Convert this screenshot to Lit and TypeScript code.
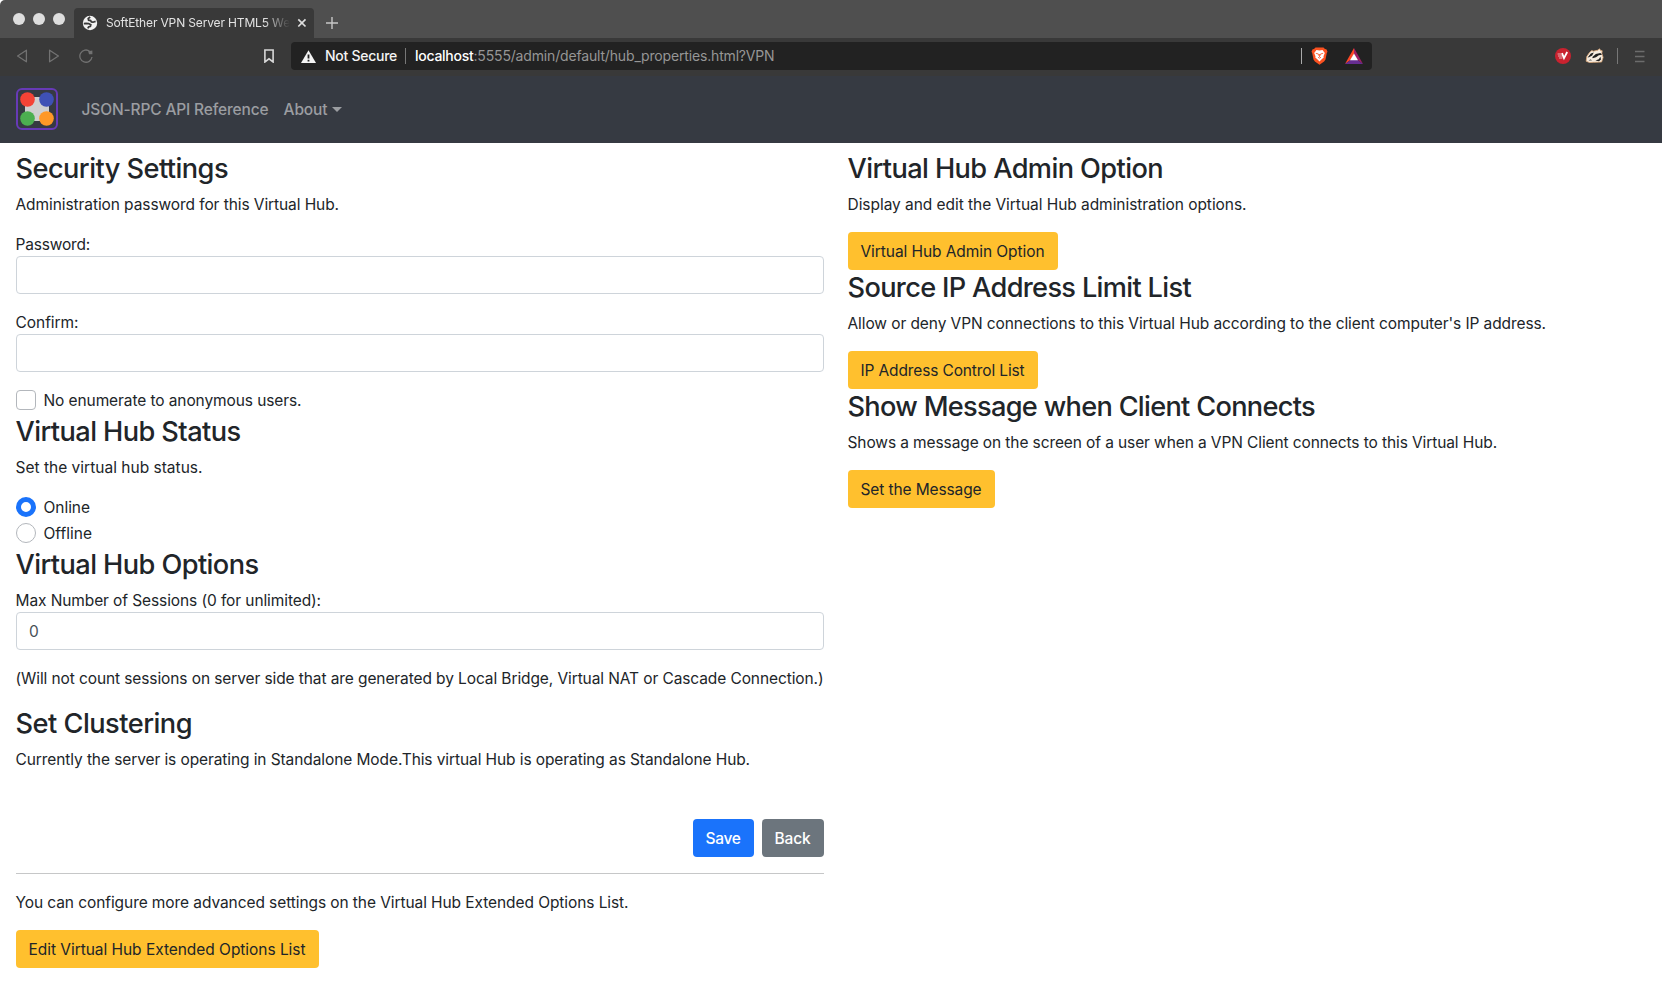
import { LitElement, html, css, svg } from "lit";
import { customElement, property } from "lit/decorators.js";

/** One line of text whose tracking is adjusted to reach a given width. */
@customElement("fit-text")
class FitText extends LitElement {
  @property({ type: Number }) w = 0;
  static styles = css`
    :host { display: inline-block; white-space: nowrap; }
    span { display: inline-block; }
  `;
  render() {
    return html`<span><slot></slot></span>`;
  }
  firstUpdated() {
    const el = this.renderRoot.querySelector("span")!;
    const n = (this.textContent || "").length;
    const natural = el.getBoundingClientRect().width;
    if (this.w && n) this.style.letterSpacing = `${(this.w - natural) / n}px`;
  }
}

@customElement("browser-chrome")
class BrowserChrome extends LitElement {
  static styles = css`
    :host { display: block; font-family: Inter, "Liberation Sans", sans-serif; }
    svg { display: block; flex: none; }
    .strip { height: 38px; background: #4f4f4f; display: flex; align-items: flex-end; border-top-left-radius: 5px; }
    .lights { display: flex; gap: 8px; padding: 0 9px 13px 13px; }
    .light { width: 12px; height: 12px; border-radius: 50%; background: #dedede; }
    .tab { box-sizing: border-box; width: 240px; height: 30px; background: #393939; border-radius: 4px 4px 0 0; display: flex; align-items: center; padding: 0 7px 0 8px; }
    .title { width: 184px; margin-left: 8px; overflow: hidden; font-size: 12px; line-height: 20px; color: #e3e3e3; white-space: nowrap;
      -webkit-mask-image: linear-gradient(90deg, #000 158px, transparent 184px); mask-image: linear-gradient(90deg, #000 158px, transparent 184px); }
    .x { margin-left: 7px; }
    .plus { margin: 0 0 8px 11px; }
    .bar { height: 38px; background: #393939; display: flex; align-items: center; padding-right: 17px; box-sizing: border-box; }
    .nav { display: flex; width: 264px; padding-left: 16px; box-sizing: border-box; gap: 20px; margin-top: -2px; }
    .mark { margin-top: -2px; }
    .reload { margin-left: -1px; }
    .address { box-sizing: border-box; margin-left: 17px; width: 1081px; height: 28px; margin-top: -2px; border-radius: 4px; background: #222; display: flex; align-items: center; padding: 0 9px 0 10px; font-size: 14px; line-height: 20px; }
    .warn { color: #f4f4f4; margin-left: 9px; font-weight: 500; }
    .sep { width: 1px; height: 16px; background: #777; margin: 0 9px 0 8px; }
    .host { color: #fff; font-weight: 500; }
    .path { color: #969696; }
    .marks { margin-left: auto; display: flex; align-items: center; }
    .line { width: 1px; height: 16px; background: #aaa; margin-right: 9px; }
    .tri { margin-left: 17px; }
    .ext { margin-left: auto; display: flex; align-items: center; margin-top: -2px; }
    .ext .line { background: #777; margin: 0 16px 0 13px; }
    .badger { margin-left: 14px; }
  `;
  render() {
    return html`
      <div class="strip">
        <div class="lights"><div class="light"></div><div class="light"></div><div class="light"></div></div>
        <div class="tab">
          <svg width="16" height="16" viewBox="0 0 16 16"><circle cx="8" cy="8" r="7.2" fill="#f2f2f2"/>
            <path d="M1.8 8.6 4 8.4 6.6 8.6 8.8 9.8 8.4 11.4 6.6 12 5.8 13.4M8.2 2 6.2 3.6 6.6 5.2 8.6 5.6 9.4 7 11 7.2 13.6 6.4" fill="none" stroke="#393939" stroke-width="1.7"/></svg>
          <div class="title"><fit-text w="184">SoftEther VPN Server HTML5 We</fit-text></div>
          <svg class="x" width="10" height="10" viewBox="0 0 10 10"><path d="m1.3 1.3 7.2 7.2m0-7.2-7.2 7.2" stroke="#dedede" stroke-width="1.7"/></svg>
        </div>
        <svg class="plus" width="14" height="14" viewBox="0 0 14 14"><path d="M7 1v12M1 7h12" stroke="#c8c8c8" stroke-width="1.4"/></svg>
      </div>
      <div class="bar">
        <div class="nav">
          <svg width="12" height="14" viewBox="0 0 12 14"><path d="M10.4 1.2v11.6L1.6 7z" fill="none" stroke="#727272" stroke-width="1.3" stroke-linejoin="round"/></svg>
          <svg width="12" height="14" viewBox="0 0 12 14"><path d="M1.6 1.2v11.6L10.4 7z" fill="none" stroke="#727272" stroke-width="1.3" stroke-linejoin="round"/></svg>
          <svg class="reload" width="14" height="14" viewBox="0 0 14 14"><path d="M10.8 2.4A6.1 6.1 0 1 0 13 8" fill="none" stroke="#727272" stroke-width="1.3"/><path d="M9.2 2.2 13.4 1.6 13.4 5.2 10 5.2z" fill="#727272"/></svg>
        </div>
        <svg class="mark" width="10" height="14" viewBox="0 0 10 14"><path d="M.9 1h8.2v12L5 9.8.9 13z" fill="none" stroke="#d8d8d8" stroke-width="1.6"/></svg>
        <div class="address">
          <svg width="15" height="13" viewBox="0 0 15 13"><path d="M7.5.2 15 13H0z" fill="#f4f4f4"/><path d="M7.5 4.6v4M7.5 9.8v1.6" stroke="#222" stroke-width="1.8"/></svg>
          <fit-text class="warn" w="72">Not Secure</fit-text>
          <div class="sep"></div>
          <fit-text class="host" w="58.5">localhost</fit-text><fit-text class="path" w="301">:5555/admin/default/hub_properties.html?VPN</fit-text>
          <div class="marks">
            <div class="line"></div>
            <svg width="17" height="18" viewBox="0 0 17 18"><path d="M4.5.5h8l1.5 1.6 1.4.2 1.1 2.4-.7 1.4-1.3 6.5-1.4 2L8.5 17.8 3.9 14.6l-1.4-2L1.2 6.1.5 4.7l1.1-2.4L3 2.1z" fill="#fa5120"/>
              <path d="M8.5 3.6 11.5 3.1l2.3 2.8-1.3 3.4.2 1.3-2 1.6-2.2 2.2-2.2-2.2-2-1.6.2-1.3-1.3-3.4 2.3-2.8z" fill="#fff"/><path d="m4.8 6.3 2.5.6.2 1.6m4.7-2.2-2.5.6-.2 1.6M7 10.3l1.5.8 1.5-.8M8.5 7v3" fill="none" stroke="#fa5120" stroke-width=".8"/></svg>
            <svg class="tri" width="18" height="16" viewBox="0 0 18 16"><path d="M9 0v6L5.5 12 0 16z" fill="#ff4724"/><path d="M9 0v6l3.5 6L18 16z" fill="#9e1f63"/><path d="M0 16 5.5 12h7L18 16z" fill="#662d91"/><path d="m9 5.5 4 6.8H5z" fill="#fff"/></svg>
          </div>
        </div>
        <div class="ext">
          <svg width="16" height="16" viewBox="0 0 16 16"><circle cx="8" cy="8" r="8" fill="#c9222f"/><path d="M2.6 6h3.8M3 8h4.2M4 10h3.4" stroke="#eab0b5" stroke-width="1.2"/><path d="m7 5.2 2 5 3.2-6.2" fill="none" stroke="#fff" stroke-width="1.8"/></svg>
          <svg class="badger" width="19" height="16" viewBox="0 0 19 16"><path d="M1.2 13.2 1.8 8.5 4.6 4.4 6.8 2.6l1.6.6 4.4-1 1.8-1.4 1 1.8 1.6.2-.4 2.6 1.3 4-1.5 4.6-7.9.3-4.2.2z" fill="#f6ece0" stroke="#e0aa78" stroke-width=".8"/><path d="M2.6 9.4 5.8 5.6l3-1.2-1.6 3-3.2 1.8zM7.4 9 10.8 6l4.6-.9 1.6 1.6-3.2.6-2.8 2-3.4 1zM3.4 12.6l2-1.2 1.8.8M10.4 12.6l3.4-1.4 1.6-2.4.6 2.6-2 1.8z" fill="#202020"/></svg>
          <div class="line"></div>
          <svg width="11" height="13" viewBox="0 0 11 13"><path d="M1 1.5h9.5M1 6.5h9.5M1 11.5h9.5" stroke="#6c6c6c" stroke-width="1.6"/></svg>
        </div>
      </div>`;
  }
}

@customElement("app-root")
class AppRoot extends LitElement {
  static styles = css`
    :host { display: block; height: 981px; overflow: hidden; background: #fff; color: #212529; font: 15.5px/26px Inter, "Liberation Sans", sans-serif; }
    fit-text { vertical-align: top; margin: 0 0.5px 0 -0.5px; }
    .navbar { height: 67px; background: #363a42; display: flex; align-items: center; padding: 0 16px 1px; box-sizing: border-box; color: #9b9da1; font-weight: 500; }
    .navbar fit-text { padding-top: 2px; }
    .logo { display: block; margin-right: 24px; }
    .navbar .about { margin-left: 14.5px; }
    .caret { margin-left: 4px; border: 5px solid transparent; border-top-color: #9b9da1; border-bottom: 0; }
    .page { display: grid; grid-template-columns: 808px 1fr; column-gap: 24px; padding: 8px 16px 0; }
    h3 { margin: 0 0 8px; font-weight: 500; font-size: 27.2px; line-height: 35px; height: 33px; }
    p { margin: 0 0 16px; height: 24px; }
    .label { display: block; height: 24px; }
    .input { box-sizing: border-box; height: 38px; border: 1px solid #ced4da; border-radius: 4px; padding: 6px 12px; margin-bottom: 16px; color: #495057; }
    .check { height: 26px; display: flex; gap: 8px; }
    .box { box-sizing: border-box; width: 20px; height: 20px; margin-top: 2px; border: 1px solid #b3b7bc; border-radius: 4px; background: #fff; }
    .round { border-radius: 50%; }
    .on { border: 5.5px solid #1a73fb; }
    .btn { display: inline-block; vertical-align: top; box-sizing: border-box; height: 38px; padding: 7px 13px; border-radius: 4px; background: #ffc02e; }
    .right .btn { display: block; width: fit-content; }
    .actions { display: flex; justify-content: flex-end; gap: 8px; margin-top: 48px; }
    .save { background: #1a73fb; color: #fff; font-weight: 500; }
    .back { background: #6c757d; color: #fff; font-weight: 500; }
    .rule { height: 1px; background: #c6c7c8; margin: 16px 0; }
  `;
  private section(title: string, tw: number, text: string, w: number, btn: string, bw: number) {
    return html`<h3><fit-text w=${tw}>${title}</fit-text></h3>
      <p><fit-text w=${w}>${text}</fit-text></p>
      <div class="btn"><fit-text w=${bw}>${btn}</fit-text></div>`;
  }
  render() {
    return html`
      <browser-chrome></browser-chrome>
      <div class="navbar">
        <svg class="logo" width="42" height="42" viewBox="0 0 42 42"><rect x="1" y="1" width="40" height="40" rx="5" fill="none" stroke="#673ab7" stroke-width="2"/>
          <rect x="9" y="9" width="24" height="24" fill="#cfcfcf"/>
          ${[[11.5, 11.5, "#f44336"], [30.5, 11.5, "#3f51b5"], [11.5, 30.5, "#4caf50"], [30.5, 30.5, "#ff9826"]].map(
            ([x, y, c]) => svg`<circle cx=${x} cy=${y} r="7.3" fill=${c}></circle>`)}
        </svg>
        <fit-text w="187">JSON-RPC API Reference</fit-text>
        <fit-text class="about" w="44">About</fit-text><div class="caret"></div>
      </div>
      <div class="page">
        <div>
          <h3><fit-text w="212.5">Security Settings</fit-text></h3>
          <p><fit-text w="323.5">Administration password for this Virtual Hub.</fit-text></p>
          <div class="label"><fit-text w="74.5">Password:</fit-text></div>
          <div class="input"></div>
          <div class="label"><fit-text w="63">Confirm:</fit-text></div>
          <div class="input"></div>
          <div class="check"><div class="box"></div><fit-text w="258">No enumerate to anonymous users.</fit-text></div>
          <h3><fit-text w="225">Virtual Hub Status</fit-text></h3>
          <p><fit-text w="187">Set the virtual hub status.</fit-text></p>
          <div class="check"><div class="box round on"></div><fit-text w="46.5">Online</fit-text></div>
          <div class="check"><div class="box round"></div><fit-text w="48.5">Offline</fit-text></div>
          <h3><fit-text w="243">Virtual Hub Options</fit-text></h3>
          <div class="label"><fit-text w="305.5">Max Number of Sessions (0 for unlimited):</fit-text></div>
          <div class="input">0</div>
          <p><fit-text w="808">(Will not count sessions on server side that are generated by Local Bridge, Virtual NAT or Cascade Connection.)</fit-text></p>
          <h3><fit-text w="176.5">Set Clustering</fit-text></h3>
          <p><fit-text w="734.5">Currently the server is operating in Standalone Mode.This virtual Hub is operating as Standalone Hub.</fit-text></p>
          <div class="actions">
            <div class="btn save"><fit-text w="35">Save</fit-text></div>
            <div class="btn back"><fit-text w="36">Back</fit-text></div>
          </div>
          <div class="rule"></div>
          <p><fit-text w="613">You can configure more advanced settings on the Virtual Hub Extended Options List.</fit-text></p>
          <div class="btn"><fit-text w="277">Edit Virtual Hub Extended Options List</fit-text></div>
        </div>
        <div class="right">
          ${this.section("Virtual Hub Admin Option", 315.5, "Display and edit the Virtual Hub administration options.", 399, "Virtual Hub Admin Option", 184)}
          ${this.section("Source IP Address Limit List", 343.5, "Allow or deny VPN connections to this Virtual Hub according to the client computer's IP address.", 698.5, "IP Address Control List", 164)}
          ${this.section("Show Message when Client Connects", 467.5, "Shows a message on the screen of a user when a VPN Client connects to this Virtual Hub.", 649.5, "Set the Message", 121)}
        </div>
      </div>`;
  }
}
